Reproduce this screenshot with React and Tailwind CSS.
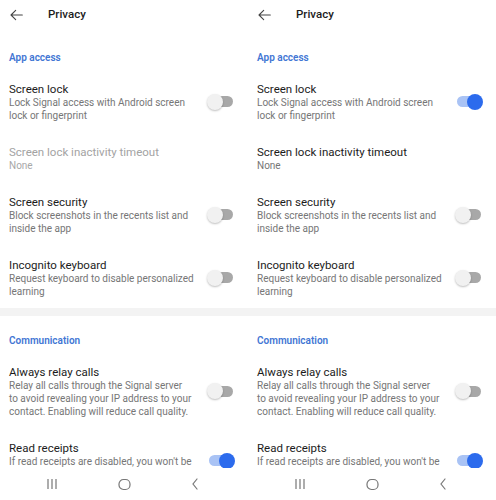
import React from 'react';

function Toggle({ on }) {
  return (
    <div className="relative w-[28px] h-[16px] shrink-0 flex items-center">
      <div className={`w-[24px] h-[11px] rounded-full ml-[2px] ${on ? 'bg-[#a9c3f5]' : 'bg-[#a8a8a8]'}`} />
      <div
        className={`absolute top-0 w-[16px] h-[16px] rounded-full ${on ? 'right-0 bg-[#2c6bed]' : 'left-0 bg-[#f1f1f1] shadow-[0_1px_2px_rgba(0,0,0,0.25)]'}`}
      />
    </div>
  );
}

function Item({ title, lines, toggle, disabled }) {
  return (
    <div className="flex items-center pl-[9px] pr-[13px] py-[11.5px]">
      <div className="flex-1">
        <div className={`text-[11.5px] leading-[14px] ${disabled ? 'text-[#a3a3a3]' : 'text-[#1c1c1c]'}`}>{title}</div>
        {lines.map((l, i) => (
          <div key={i} className={`text-[10px] leading-[13px] ${disabled ? 'text-[#a8a8a8]' : 'text-[#767676]'}`}>{l}</div>
        ))}
      </div>
      {toggle !== undefined && <Toggle on={toggle} />}
    </div>
  );
}

function SectionTitle({ children }) {
  return <div className="px-[9px] text-[10px] leading-[12px] font-semibold text-[#4276d4]">{children}</div>;
}

function Panel({ screenLock }) {
  return (
    <div className="relative w-[248px] h-[500px] bg-white overflow-hidden">
      <div className="h-[29px] flex items-center">
        <svg className="ml-[9px] w-[16px] h-[16px]" viewBox="0 0 24 24" fill="none" stroke="#444" strokeWidth="1.6" strokeLinecap="round" strokeLinejoin="round">
          <path d="M20 12H4M10 5l-7 7 7 7" />
        </svg>
        <span className="ml-[23px] text-[11.5px] font-medium text-[#1c1c1c]">Privacy</span>
      </div>
      <div className="pt-[23px] pb-[6px]">
        <SectionTitle>App access</SectionTitle>
      </div>
      <Item title="Screen lock" lines={['Lock Signal access with Android screen', 'lock or fingerprint']} toggle={screenLock} />
      <Item title="Screen lock inactivity timeout" lines={['None']} disabled={!screenLock} />
      <Item title="Screen security" lines={['Block screenshots in the recents list and', 'inside the app']} toggle={false} />
      <Item title="Incognito keyboard" lines={['Request keyboard to disable personalized', 'learning']} toggle={false} />
      <div className="h-[8px] bg-[#f3f3f3] mt-[-1px]" />
      <div className="pt-[19px] pb-[6px]">
        <SectionTitle>Communication</SectionTitle>
      </div>
      <Item
        title="Always relay calls"
        lines={['Relay all calls through the Signal server', 'to avoid revealing your IP address to your', 'contact. Enabling will reduce call quality.']}
        toggle={false}
      />
      <Item
        title="Read receipts"
        lines={["If read receipts are disabled, you won't be", 'able to see read receipts from others.']}
        toggle={true}
      />
      <div className="absolute left-0 right-0 bottom-0 h-[32px] bg-white flex items-center justify-between pl-[46px] pr-[49px]">
        <svg width="12" height="12" viewBox="0 0 12 12" stroke="#777" strokeWidth="1.2">
          <path d="M2 1v10M6 1v10M10 1v10" />
        </svg>
        <svg width="13" height="13" viewBox="0 0 13 13" fill="none" stroke="#777" strokeWidth="1.2">
          <rect x="1" y="1.5" width="11" height="10" rx="4.5" />
        </svg>
        <svg width="8" height="12" viewBox="0 0 8 12" fill="none" stroke="#777" strokeWidth="1.2" strokeLinecap="round">
          <path d="M6 1L2 6l4 5" />
        </svg>
      </div>
    </div>
  );
}

export default function App() {
  return (
    <div className="flex w-[496px] h-[500px] bg-white" style={{ fontFamily: 'Roboto, "Noto Sans", sans-serif' }}>
      <Panel screenLock={false} />
      <Panel screenLock={true} />
    </div>
  );
}
